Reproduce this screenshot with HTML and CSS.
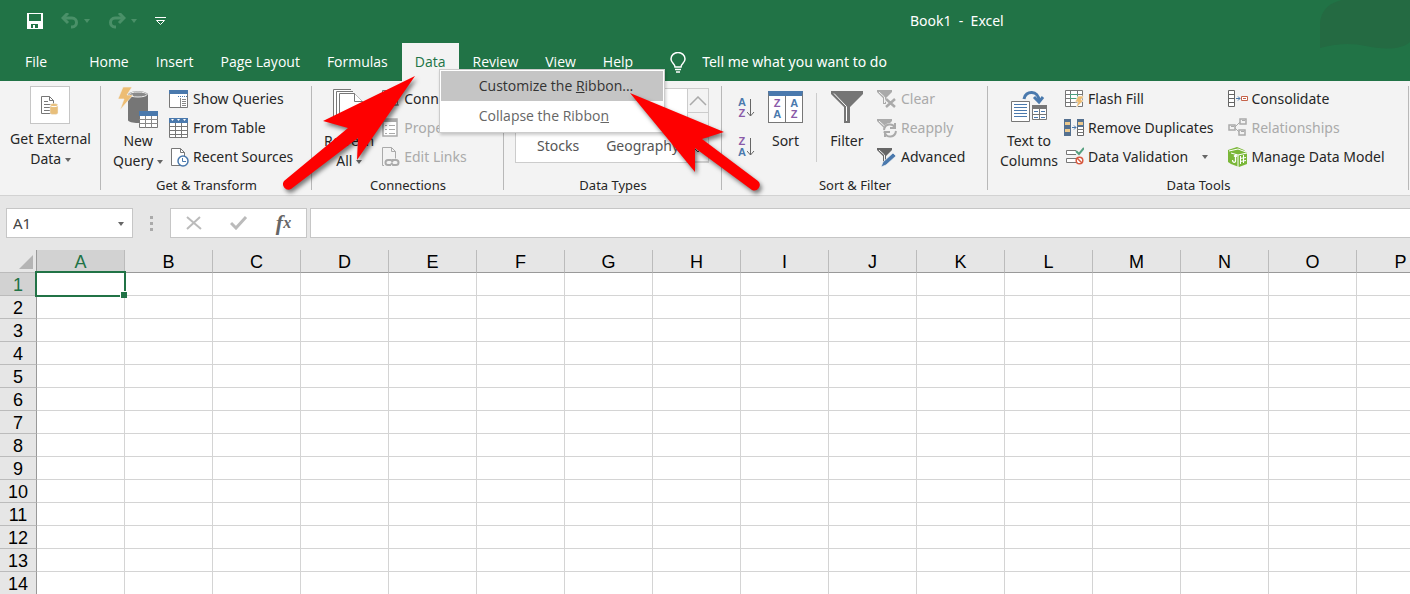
FILE: index.html
```html
<!DOCTYPE html>
<html lang="en">
<head>
  <meta charset="UTF-8">
  <title>Book1 - Excel</title>
  <link rel="stylesheet" href="styles.css">
</head>
<body>
  <header class="top">
    <div class="title-bar">
      <div class="quick-access">
        <button class="qa-btn" aria-label="Save">
          <svg width="16" height="16" viewBox="0 0 16 16"><path fill="#fff" fill-rule="evenodd" d="M0 0h16v16H0zM2 1v7h12V1zM4 11v4h2v-3h2v3h3v-4z"/></svg>
        </button>
        <button class="qa-btn faded undo" aria-label="Undo">
          <svg width="18" height="16" viewBox="0 0 18 16" fill="none" stroke="#4a9068" stroke-width="3"><path d="M2 5h9c6 0 6 9 0 9h-1"/><path d="M7 0L2 5l5 5"/></svg>
          <span class="caret"></span>
        </button>
        <button class="qa-btn faded redo" aria-label="Redo">
          <svg width="18" height="16" viewBox="0 0 18 16" fill="none" stroke="#4a9068" stroke-width="3"><path d="M16 5H7c-6 0-6 9 0 9h1"/><path d="M11 0l5 5-5 5"/></svg>
          <span class="caret"></span>
        </button>
        <button class="qa-btn" aria-label="Customize Quick Access Toolbar">
          <svg width="11" height="8" viewBox="0 0 11 8" fill="none" stroke="#fff"><path d="M0 .5h11M1.500 3.500h8l-4 4z"/></svg>
        </button>
      </div>
      <h1 class="title">Book1&nbsp; -&nbsp; Excel</h1>
      <svg class="blot" width="90" height="50" viewBox="0 0 90 50"><path fill="#246a42" d="M0 48V28C-1 12 8 3 22 0h68v42c-10 9-30 7-44 4-14-3-28-3-46 2z"/></svg>
    </div>
    <nav class="tabs">
      <a class="tab file" href="#">File</a>
      <a class="tab" href="#">Home</a>
      <a class="tab" href="#">Insert</a>
      <a class="tab" href="#">Page Layout</a>
      <a class="tab" href="#">Formulas</a>
      <div class="tab-wrap">
        <a class="tab active" href="#">Data</a>
        <div class="context-menu">
          <button class="menu-item selected">Customize the <u>R</u>ibbon...</button>
          <button class="menu-item">Collapse the Ribbo<u>n</u></button>
        </div>
      </div>
      <a class="tab" href="#">Review</a>
      <a class="tab" href="#">View</a>
      <a class="tab" href="#">Help</a>
      <label class="tell-me">
        <svg width="16" height="21" viewBox="0 0 16 21" fill="none" stroke="#fff" stroke-width="1.500"><path d="M5 15c0-3-4-4-4-8a7 6.500 0 0 1 14 0c0 4-4 5-4 8zM5 17.500h6M6 20h4"/></svg>
        <input type="text" placeholder="Tell me what you want to do" aria-label="Tell me what you want to do">
      </label>
    </nav>
  </header>

  <main class="ribbon">
    <section class="group">
      <div class="tools center">
        <button class="big external">
          <span class="icon-box">
            <svg width="18" height="19" viewBox="0 0 18 19"><path fill="#fff" stroke="#777" d="M.5.500h8l4 4v13H.5z"/><path fill="none" stroke="#777" d="M8.500.500v4h4M3 5.500h4M3 8.500h7M3 11.500h6M3 14.500h6"/><path fill="#e8bf7b" stroke="#f3f3f3" stroke-width=".5" d="M9 9c0-2 8-2 8 0v8c0 2-8 2-8 0z"/><path fill="none" stroke="#fff" d="M9 9.500c1 1.500 7 1.500 8 0"/></svg>
          </span>
          <span>Get External<br>Data <i class="caret"></i></span>
        </button>
      </div>
    </section>

    <section class="group">
      <div class="tools query">
        <button class="big">
          <svg width="40" height="42" viewBox="0 0 40 42"><path fill="#767676" d="M10 9c0-5 20-5 20 0v25c0 4-20 4-20 0z"/><ellipse cx="20" cy="8.500" rx="9" ry="2.500" fill="#8a8a8a" stroke="#eee"/><path fill="#edbd74" stroke="#f3f3f3" stroke-width=".6" d="M5 1h9L9 9h6L2 24l4-11H0z"/><path fill="#fff" stroke="#777" d="M21.500 25.500h18v16h-18z"/><path fill="#4a79ad" d="M21 25h19v5H21z"/><path stroke="#888" fill="none" d="M21 33.500h19M21 37.500h19M27.500 30v12M33.500 30v12"/></svg>
          <span>New<br>Query <i class="caret"></i></span>
        </button>
        <div class="list">
          <button class="small"><svg width="20" height="20" viewBox="0 0 20 20"><path fill="#fff" stroke="#777" d="M.5 1.500h18v17H.5z"/><path fill="#4a79ad" d="M0 1h19v4H0z"/><path stroke="#4a79ad" stroke-dasharray="1 1" d="M9 7.500h9"/><path fill="none" stroke="#888" d="M11.500 9v9M13 10.500h4M13 12.500h4M13 14.500h4M13 16.500h4"/></svg>Show Queries</button>
          <button class="small"><svg width="20" height="20" viewBox="0 0 20 20"><path fill="#fff" stroke="#777" d="M.5.500h18v19H.5z"/><path fill="#4a79ad" d="M0 0h19v5H0z"/><path fill="#fff" d="M2 1h3L3.500 3zM8 1h3L9.500 3zM14 1h3l-1.500 2z"/><path fill="none" stroke="#777" d="M0 8.500h19M0 12.500h19M0 16.500h19M6.500 5v15M12.500 5v15"/></svg>From Table</button>
          <button class="small"><svg width="20" height="20" viewBox="0 0 20 20"><path fill="#fff" stroke="#777" d="M2.500 1.500h9l4 4v13h-13z"/><path fill="none" stroke="#777" d="M11.500 1.500v4h4"/><circle cx="14" cy="14" r="5" fill="#fff" stroke="#4a79ad" stroke-width="1.500"/><path fill="none" stroke="#4a79ad" d="M13.500 11v3.500H17"/></svg>Recent Sources</button>
        </div>
      </div>
      <h2>Get &amp; Transform</h2>
    </section>

    <section class="group">
      <div class="tools connections">
        <button class="big">
          <svg width="32" height="42" viewBox="0 0 32 42" fill="#fff" stroke="#777"><path d="M.5 32V3.500H18M3.500 34V5.500H20M6.500 36V7.500h15l8 8V38h-23z"/><path d="M21.500 7.500v8h8"/></svg>
          <span>Refresh<br>All <i class="caret"></i></span>
        </button>
        <div class="list">
          <button class="small"><svg width="18" height="20" viewBox="0 0 18 20" fill="#fff" stroke="#777"><path d="M.5 13V1.500h9M3.500 15V3.500h8l4 4V16h-12z"/><path fill="none" d="M9 16h8"/></svg>Connections</button>
          <button class="small" disabled><svg width="18" height="20" viewBox="0 0 18 20"><path fill="#fff" stroke="#aaa" stroke-width="1.500" d="M1 1h14v17H1z"/><path fill="#aaa" d="M1 1h14v3H1z"/><path fill="none" stroke="#aaa" d="M7 7.500h6M7 11.500h6M7 15.500h6M3 7.500h2M3 11.500h2M3 15.500h2"/></svg>Properties</button>
          <button class="small" disabled><svg width="18" height="20" viewBox="0 0 18 20" fill="none" stroke="#aaa"><path d="M2 18.500H.5V.500h9l4 4v7M9.500.500v4h4"/><path stroke-width="2" d="M9 18H6a2.500 2.500 0 0 1 0-5h3l2 2M10 13h4a2.500 2.500 0 0 1 0 5h-3l-2-2"/></svg>Edit Links</button>
        </div>
      </div>
      <h2>Connections</h2>
    </section>

    <section class="group">
      <div class="tools types">
        <div class="gallery">
          <button>Stocks</button>
          <button>Geography</button>
        </div>
        <div class="scroll">
          <button aria-label="Scroll up"><svg width="18" height="10" viewBox="0 0 18 10" fill="none" stroke="#aaa" stroke-width="1.500"><path d="M1 9l8-8 8 8"/></svg></button>
          <button aria-label="Scroll down"></button>
          <button aria-label="More data types"><svg width="10" height="8" viewBox="0 0 10 8" fill="none" stroke="#444"><path d="M1 .5h8M1 3l4 4 4-4"/></svg></button>
        </div>
      </div>
      <h2>Data Types</h2>
    </section>

    <section class="group">
      <div class="tools sorting">
        <div class="az">
          <button aria-label="Sort A to Z">
            <span class="letters"><b class="a">A</b><b class="z">Z</b></span>
            <svg width="8" height="20" viewBox="0 0 8 20"><path fill="none" stroke="#666" d="M3.500 1v17M0 14l3.500 4L7 14"/></svg>
          </button>
          <button aria-label="Sort Z to A">
            <span class="letters"><b class="z">Z</b><b class="a">A</b></span>
            <svg width="8" height="20" viewBox="0 0 8 20"><path fill="none" stroke="#666" d="M3.500 1v17M0 14l3.500 4L7 14"/></svg>
          </button>
        </div>
        <button class="big sort">
          <span class="sort-icon">
            <span class="letters"><b class="z">Z</b><b class="a">A</b></span>
            <span class="letters"><b class="a">A</b><b class="z">Z</b></span>
          </span>
          <span>Sort</span>
        </button>
        <div class="divider"></div>
        <button class="big">
          <svg width="34" height="42" viewBox="0 0 34 42"><path fill="#757575" d="M1 5h32v3L20 21v16h-6V21L1 8z"/><path fill="none" stroke="#fff" d="M4 7.500l12.500 13V35"/></svg>
          <span>Filter</span>
        </button>
        <div class="list">
          <button class="small" disabled><svg width="20" height="20" viewBox="0 0 20 20"><path fill="#aaa" d="M0 1h15v2L9 9v6H6V9L0 3z"/><path fill="none" stroke="#f3f3f3" d="M2 3l5.500 5v6"/><path stroke="#f3f3f3" stroke-width="5" d="M9 10l9 8M18 10l-9 8"/><path stroke="#aaa" stroke-width="2.500" d="M9 10l9 8M18 10l-9 8"/></svg>Clear</button>
          <button class="small" disabled><svg width="20" height="20" viewBox="0 0 20 20"><path fill="#aaa" d="M0 1h15v2L9 9v6H6V9L0 3z"/><path fill="none" stroke="#f3f3f3" d="M2 3l5.500 5v6"/><circle cx="13" cy="12" r="7" fill="#f3f3f3"/><path fill="none" stroke="#aaa" stroke-width="2" d="M7 12c1-7 9-7 11-2M18 5v5h-5M19 13c-1 7-9 7-11 2M8 19v-5h5"/></svg>Reapply</button>
          <button class="small"><svg width="20" height="20" viewBox="0 0 20 20"><path fill="#666" d="M0 1h15v2L9 9v6H6V9L0 3z"/><path fill="none" stroke="#f3f3f3" d="M2 3l5.500 5v6"/><path fill="#4a79ad" stroke="#f3f3f3" stroke-width=".7" d="M16 6l3 3L9 18l-5 2 2-5z"/></svg>Advanced</button>
        </div>
      </div>
      <h2>Sort &amp; Filter</h2>
    </section>

    <section class="group">
      <div class="tools data-tools">
        <button class="big">
          <svg width="38" height="42" viewBox="0 0 38 42"><path fill="#fff" stroke="#777" d="M1.500 15.500h18v20h-18z"/><path stroke="#4a79ad" d="M4 18.500h13M4 21.500h13M4 24.500h13M4 27.500h13M4 30.500h13"/><path fill="#fff" stroke="#777" d="M22.500 19.500h14v14h-14z"/><path fill="#777" d="M22 19h15v4H22z"/><path stroke="#777" d="M29.500 23v11M22 28.500h15"/><path stroke="#4a79ad" d="M24 25.500h4M31 25.500h4M24 31.500h4M31 31.500h4"/><path fill="none" stroke="#4a79ad" stroke-width="3" d="M14 13c1-9 15-9 15 2"/><path fill="none" stroke="#4a79ad" stroke-width="3" d="M24 11l5 5 4-5"/></svg>
          <span>Text to<br>Columns</span>
        </button>
        <div class="list">
          <button class="small"><svg width="20" height="20" viewBox="0 0 20 20"><path fill="#fff" stroke="#777" d="M1.500 1.500h17v16h-17zM1 5.500h17M1 9.500h17M1 13.500h17M6.500 1v16M13.500 1v16"/><path fill="#fff" stroke="#4aa07c" d="M6.500 5.500h7v4h-7z"/><path fill="#edbd74" stroke="#f3f3f3" stroke-width=".7" d="M14 7h6l-3 4h3l-8 8 2-6h-3z"/></svg>Flash Fill</button>
          <button class="small"><svg width="20" height="20" viewBox="0 0 20 20"><path fill="#54708f" d="M0 1h7v17H0z"/><path fill="#edc98c" d="M1 4h5v3H1zM1 11h5v3H1z"/><path fill="#fff" stroke="#666" d="M13.500 1.500h6v16h-6z"/><path fill="#54708f" d="M13 1h7v8h-7z"/><path fill="#edc98c" d="M14 4h5v3h-5z"/><path fill="none" stroke="#777" d="M13 11.500h7M13 14.500h7"/><path fill="none" stroke="#4a79ad" d="M8 9.500h4M10 7.500l2 2-2 2"/></svg>Remove Duplicates</button>
          <button class="small"><svg width="20" height="20" viewBox="0 0 20 20"><path fill="#fff" stroke="#777" d="M12 7.500H2.500v-4H12M12 15.500H2.500v-4H12"/><path fill="none" stroke="#55a07f" stroke-width="2" d="M12 4l3 3 5-6"/><circle cx="15.500" cy="13.500" r="3.300" fill="#fff" stroke="#d75a40" stroke-width="1.500"/><path stroke="#d75a40" stroke-width="1.500" d="M13 11l5 5"/></svg>Data Validation <i class="caret"></i></button>
        </div>
        <div class="list">
          <button class="small"><svg width="20" height="20" viewBox="0 0 20 20"><path fill="#fff" stroke="#666" d="M.5 1.500h6v16h-6zM0 5.500h7M0 9.500h7M0 13.500h7"/><path fill="none" stroke="#4a79ad" d="M8 9.500h4M10 7.500l2 2-2 2"/><path fill="#fff" stroke="#c5634a" d="M13.500 7.500h6v4h-6zM15 9.500h3"/></svg>Consolidate</button>
          <button class="small" disabled><svg width="20" height="20" viewBox="0 0 20 20" fill="none" stroke="#aaa"><path stroke-width="1.500" d="M1 7h6v5H1zM12 1h6v5h-6zM11 12h6v5h-6z"/><path d="M7 9l5-5M7 10l4 4M3 8.500h3M14 2.500h3M13 13.500h3"/></svg>Relationships</button>
          <button class="small"><svg width="20" height="20" viewBox="0 0 20 20"><path fill="#7ab738" d="M0 3l9-3 7 3 3 3v11l-8 3-8-3-3-2z"/><path fill="none" stroke="#fff" d="M3 6l7 2v12M10 8l9-2M12.500 9v8M15.500 8v8M12 11.500l6-1M12 14.500l6-1M1 4l9-2 8 3"/><path fill="none" stroke="#fff" stroke-width="1.300" d="M7.500 8v6c0 2-3 2-3-1M6 9.500L7.500 8 9 9.500"/></svg>Manage Data Model</button>
        </div>
      </div>
      <h2>Data Tools</h2>
    </section>
  </main>

  <div class="formula-bar">
    <div class="name-box">
      <input type="text" value="A1" aria-label="Name box">
      <button aria-label="Show names"><i class="caret"></i></button>
    </div>
    <div class="grip"><i></i><i></i><i></i></div>
    <div class="formula-btns">
      <button aria-label="Cancel"><svg width="16" height="14" viewBox="0 0 16 14" stroke="#bbb" stroke-width="2"><path d="M1 1l14 12M14 1L1 13"/></svg></button>
      <button aria-label="Enter"><svg width="18" height="14" viewBox="0 0 18 14" fill="none" stroke="#bbb" stroke-width="3"><path d="M1 7l5 5L16 1"/></svg></button>
      <button class="fx" aria-label="Insert function">f<small>x</small></button>
    </div>
    <input class="formula" type="text" aria-label="Formula bar">
  </div>

  <div class="sheet">
    <table>
      <thead><tr><th class="corner"><svg width="16" height="16" viewBox="0 0 16 16"><path fill="#b4b4b4" d="M15 1v14H1z"/></svg></th></tr></thead>
      <tbody></tbody>
    </table>
  </div>

  <svg class="arrows" width="500" height="130" viewBox="0 0 500 130">
    <g fill="#fe0000">
      <path d="M145 7L53 52l25 7-64 53a5.500 5.500 0 0 0 7 8l67-51-1 22z"/>
      <path d="M360 24l94 39-22 7 56 42a5.500 5.500 0 0 1-6 9l-57-42v24z"/>
    </g>
  </svg>
  <script src="script.js"></script>
</body>
</html>
```
FILE: styles.css
```css
* {
  box-sizing: border-box;
}

body {
  margin: 0;
  height: 100vh;
  display: flex;
  flex-direction: column;
  overflow: hidden;
  position: relative;
  background-color: #fff;
  color: #262626;
  font-family: "Noto Sans", "Open Sans", sans-serif;
  font-size: 14px;
  line-height: 20px;
}

button,
input {
  font: inherit;
  color: inherit;
  background: none;
  border: none;
  padding: 0;
  margin: 0;
}

svg {
  display: block;
  flex-shrink: 0;
}

.caret {
  display: inline-block;
  border: 3px solid transparent;
  border-top: 4px solid #666;
  border-bottom: none;
  vertical-align: middle;
}

/* Title bar and tabs */
.top {
  background-color: #217346;
  color: #fff;
}

.title-bar {
  height: 43px;
  display: flex;
  align-items: center;
  position: relative;
  padding: 0 0 2px 27px;
}

.quick-access {
  display: flex;
  align-items: center;
  gap: 18px;
  flex: 1;
}

.qa-btn {
  display: flex;
  align-items: center;
  gap: 5px;
}

.faded .caret {
  border-top-color: #4a9068;
}

.title {
  margin: 0;
  flex: 0 0 500px;
  font-size: 14px;
  font-weight: normal;
}

.blot {
  position: absolute;
  top: 0;
  right: 0;
}

.tabs {
  display: flex;
  gap: 1px;
  height: 38px;
  padding-left: 12px;
  font-family: "Open Sans", "Noto Sans", sans-serif;
}

.tab {
  display: block;
  height: 38px;
  padding: 0 13px;
  line-height: 38px;
  color: #fff;
  text-decoration: none;
  white-space: nowrap;
}

.tab.file {
  margin-right: 15px;
}

.tab.active {
  background-color: #f3f3f3;
  color: #217346;
}

.tab-wrap {
  position: relative;
}

.context-menu {
  position: absolute;
  z-index: 1;
  top: 26px;
  left: 37px;
  width: 226px;
  padding: 1px;
  background-color: #fff;
  border: 1px solid #ccc;
  box-shadow: 1px 2px 3px rgba(0, 0, 0, 0.2);
}

.menu-item {
  display: block;
  width: 100%;
  height: 30px;
  padding-left: 38px;
  text-align: left;
  color: #666;
}

.menu-item.selected {
  background-color: #c5c5c5;
  color: #333;
}

.tell-me {
  display: flex;
  align-items: center;
  gap: 16px;
  margin-left: 23px;
  font-family: "Noto Sans", "Open Sans", sans-serif;
}

.tell-me input {
  width: 240px;
}

.tell-me input::placeholder {
  color: #fff;
  opacity: 1;
}

/* Ribbon */
.ribbon {
  display: grid;
  grid-template-columns: 101fr 211fr 192fr 218fr 266fr 421fr 1fr;
  height: 115px;
  padding: 5px 0 0;
  background-color: #f3f3f3;
  border-bottom: 1px solid #d2d2d2;
}

.group {
  display: flex;
  flex-direction: column;
  justify-content: space-between;
  position: relative;
  min-width: 0;
}

.group::after {
  content: "";
  position: absolute;
  top: 0;
  right: 0;
  bottom: 5px;
  width: 1px;
  background-color: #b8b8b8;
}

.group h2 {
  margin: 0;
  font-size: 13px;
  line-height: 20px;
  font-weight: normal;
  text-align: center;
}

.tools {
  display: flex;
  align-items: flex-start;
}

.center {
  justify-content: center;
}

.big {
  display: flex;
  flex-direction: column;
  align-items: center;
  gap: 3px;
  white-space: nowrap;
}

.external {
  gap: 5px;
}

.icon-box {
  display: flex;
  align-items: center;
  justify-content: center;
  width: 40px;
  height: 38px;
  background-color: #fff;
  border: 1px solid #c6c6c6;
}

.list {
  display: flex;
  flex-direction: column;
}

.small {
  display: flex;
  align-items: center;
  gap: 4px;
  height: 29px;
  margin-top: -2px;
  margin-bottom: 2px;
  white-space: nowrap;
}

.small .caret {
  margin-left: 10px;
}

.small:disabled {
  color: #aaa;
}

.query {
  padding-left: 12px;
  gap: 6px;
}

.connections {
  padding-left: 12px;
  gap: 8px;
}

.types {
  margin: 2px 13px 0 11px;
  height: 75px;
  background-color: #fff;
  border: 1px solid #ccc;
}

.gallery {
  flex: 1;
  align-self: flex-end;
  display: flex;
  gap: 27px;
  padding: 0 0 6px 21px;
  color: #555;
}

.scroll {
  width: 21px;
  align-self: stretch;
  display: flex;
  flex-direction: column;
  border-left: 1px solid #ccc;
  background-color: #f3f3f3;
}

.scroll button {
  flex: 1;
  display: flex;
  align-items: center;
  justify-content: center;
  border-bottom: 1px solid #ccc;
}

.sorting {
  padding-left: 16px;
  gap: 13px;
}

.az {
  display: flex;
  flex-direction: column;
  gap: 17px;
  padding-top: 11px;
}

.az button {
  display: flex;
  align-items: center;
  gap: 1px;
}

.letters {
  display: flex;
  flex-direction: column;
  align-items: center;
  font-family: "Liberation Sans", Arial, sans-serif;
  font-size: 11px;
  line-height: 11px;
}

.letters b {
  display: block;
  height: 11px;
}

.sort {
  gap: 8px;
}

.sort-icon {
  display: grid;
  grid-template-columns: 1fr 1fr;
  width: 35px;
  height: 32px;
  margin-top: 5px;
  background-color: #fff;
  border: 1px solid #777;
  border-top: 5px solid #4a79ad;
}

.sort-icon .letters {
  justify-content: center;
}

.sort-icon .letters + .letters {
  border-left: 1px solid #777;
}

.a {
  color: #4a79ad;
}

.z {
  color: #8a5aa8;
}

.divider {
  width: 1px;
  height: 69px;
  margin-top: 7px;
  background-color: #ccc;
}

.data-tools {
  padding-left: 12px;
  gap: 6px;
}

.list + .list {
  margin-left: 8px;
}

/* Formula bar */
.formula-bar {
  display: flex;
  height: 54px;
  padding: 12px 0 12px 6px;
  background-color: #e6e6e6;
}

.name-box,
.formula-btns,
.formula {
  background-color: #fff;
  border: 1px solid #c6c6c6;
}

.name-box {
  display: flex;
  width: 127px;
  padding: 0 8px 0 6px;
  color: #444;
}

.name-box input {
  flex: 1;
  min-width: 0;
  font-size: 15px;
}

.grip {
  display: flex;
  flex-direction: column;
  align-items: center;
  justify-content: center;
  gap: 3px;
  width: 37px;
}

.grip i {
  width: 3px;
  height: 3px;
  background-color: #aaa;
}

.formula-btns {
  display: flex;
  width: 137px;
}

.formula-btns button {
  flex: 1;
  display: flex;
  align-items: center;
  justify-content: center;
}

.formula-btns .fx {
  font-family: "Liberation Serif", serif;
  font-size: 22px;
  font-style: italic;
  font-weight: bold;
  color: #666;
}

.fx small {
  font-size: 16px;
}

.formula {
  flex: 1;
  margin-left: 3px;
  border-right: none;
}

/* Worksheet */
.sheet {
  flex: 1;
  min-height: 0;
  overflow: hidden;
}

.sheet table {
  border-spacing: 0;
  font-family: "Liberation Sans", Arial, sans-serif;
  font-size: 18px;
  color: #000;
}

.sheet th,
.sheet td {
  height: 23px;
  padding: 2px 0 0;
  line-height: 20px;
  border-right: 1px solid #d4d4d4;
  border-bottom: 1px solid #d4d4d4;
}

.sheet th {
  min-width: 88px;
  font-weight: normal;
  background-color: #e6e6e6;
  border-right-color: #bbb;
  border-bottom-color: #999;
}

.sheet tbody th,
.sheet .corner {
  min-width: 37px;
  border-right-color: #999;
  border-bottom-color: #bbb;
}

.sheet .corner svg {
  margin-left: 18px;
}

.sheet .current {
  background-color: #d2d2d2;
  color: #217346;
}

.active-cell {
  position: relative;
}

.active-cell::before {
  content: "";
  position: absolute;
  inset: -2px;
  border: 2px solid #217346;
}

.active-cell::after {
  content: "";
  position: absolute;
  right: -3px;
  bottom: -3px;
  width: 6px;
  height: 6px;
  background-color: #217346;
  border: 1px solid #fff;
  border-right: none;
  border-bottom: none;
}

.arrows {
  position: absolute;
  z-index: 2;
  top: 69px;
  left: 270px;
  pointer-events: none;
  filter: drop-shadow(2px 3px 2px rgba(0, 0, 0, 0.5));
}
```
FILE: script.js
```js
const headRow = document.querySelector('.sheet thead tr');
const body = document.querySelector('.sheet tbody');
const columns = [...'ABCDEFGHIJKLMNOP'];

columns.forEach((name, i) => {
  const th = document.createElement('th');
  th.textContent = name;
  if (i === 0) th.classList.add('current');
  headRow.appendChild(th);
});

for (let row = 1; row <= 14; row++) {
  const tr = document.createElement('tr');
  const th = document.createElement('th');
  th.textContent = row;
  if (row === 1) th.classList.add('current');
  tr.appendChild(th);
  columns.forEach((name, i) => {
    const td = document.createElement('td');
    if (row === 1 && i === 0) td.classList.add('active-cell');
    tr.appendChild(td);
  });
  body.appendChild(tr);
}
```
